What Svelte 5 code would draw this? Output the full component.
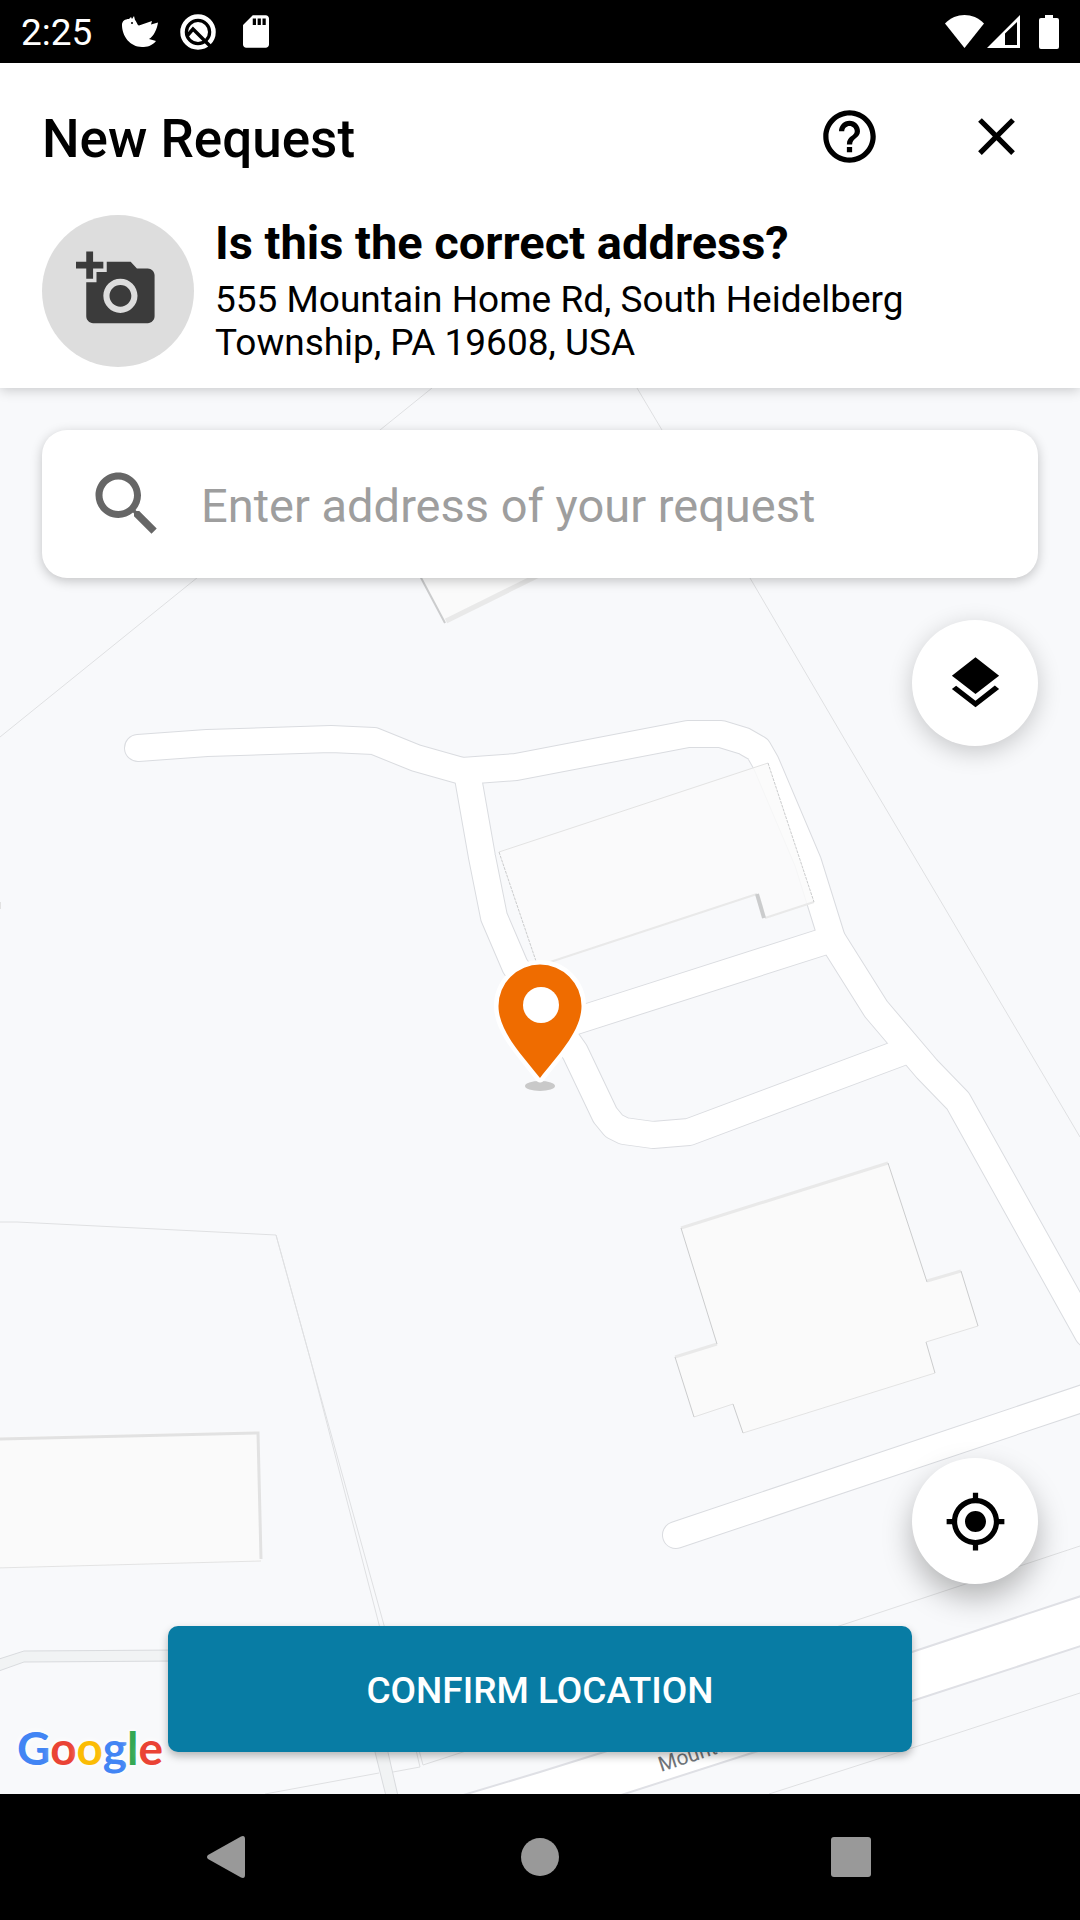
<script>
  let address = $state('');

  const roads = [
    'M138 748 L207 743 L331 739 L374 741 L416 758 L462 771 L516 767 L688 734 H721 L744 741 L758 749 L766 763 L808 862 L832 939 L876 1009 L927 1069 L958 1101 L1088 1334',
    'M467 772 L482 857 L494 917 L515 966 L575 1052 L605 1115 L614 1126 L624 1131 L653 1135 L689 1132 L900 1053',
    'M560 1026 L832 939',
    'M676 1535 L1090 1396'
  ];

  const parcelLines = [
    'M0 737 L432 388',
    'M637 388 L750 578 L845 740 L940 900 L1080 1137',
    'M0 1222 H17 L276 1235 L310 1358 L387 1636',
    'M276 1235 L310 1358 L382 1636',
    'M800 1639 L1080 1546',
    'M769 1794 L912 1748 L1080 1693',
    'M265 1794 L379 1773 M393 1772 L420 1767 L416 1750 M419 1750 L423 1765 L466 1751'
  ];

  const brand = [
    ['G', 'blue'],
    ['o', 'red'],
    ['o', 'yellow'],
    ['g', 'blue'],
    ['l', 'green'],
    ['e', 'red']
  ];
</script>

<div class="screen">
  <div class="status">
    <span class="time">2:25</span>
    <svg class="bird" viewBox="0 0 36 31" aria-hidden="true">
      <path d="M0 9C0 5 3 3 7 3L9 1l1 2 2-3 1 4c2 2 2 5 4 5.500L30 5l-1 3.500 7-2C35 13 32 20 27 23l7 2c-4 5-9 6-14 6C8 31 0 20 0 9Z" fill="#fff" />
      <circle cx="10" cy="7" r="1" />
    </svg>
    <svg class="ring" viewBox="-18 -18 36 36" aria-hidden="true">
      <circle r="15.500" fill="none" stroke="#fff" stroke-width="4.500" />
      <circle r="10" fill="#fff" />
      <path d="M-11 4L-5-3 12 14" fill="none" stroke="#000" stroke-width="3.500" />
    </svg>
    <svg class="card" viewBox="4 2 16 20" aria-hidden="true">
      <path fill="#fff" d="M18 2h-8L4.020 8 4 20c0 1.100.9 2 2 2h12c1.100 0 2-.9 2-2V4c0-1.100-.9-2-2-2zm-6 6h-2V4h2v4zm3 0h-2V4h2v4zm3 0h-2V4h2v4z" />
    </svg>
    <span class="spacer"></span>
    <svg class="wifi" viewBox="0 0 39 33" aria-hidden="true"><path fill="#fff" d="M0 8.500C11-2.800 28-2.800 39 8.500L19.500 33Z" /></svg>
    <svg class="signal" viewBox="0 0 33 33" aria-hidden="true"><path fill="#fff" fill-rule="evenodd" d="M0 33L33 0V33ZM18 18.500V30H30V7Z" /></svg>
    <svg class="battery" viewBox="0 0 20 34" aria-hidden="true"><path fill="#fff" d="M6 0h8v3h4q2 0 2 2v27q0 2-2 2H2q-2 0-2-2V5q0-2 2-2h4z" /></svg>
  </div>

  <header>
    <div class="bar">
      <h1>New Request</h1>
      <button class="icon-button" aria-label="Help">
        <svg viewBox="0 0 24 24"><path d="M11 18h2v-2h-2v2zm1-16C6.480 2 2 6.480 2 12s4.480 10 10 10 10-4.480 10-10S17.520 2 12 2zm0 18c-4.410 0-8-3.590-8-8s3.590-8 8-8 8 3.590 8 8-3.590 8-8 8zm0-14c-2.210 0-4 1.790-4 4h2c0-1.100.9-2 2-2s2 .9 2 2c0 2-3 1.750-3 5h2c0-2.250 3-2.500 3-5 0-2.210-1.790-4-4-4z" /></svg>
      </button>
      <button class="icon-button" aria-label="Close">
        <svg viewBox="0 0 24 24"><path d="M19 6.410L17.590 5 12 10.590 6.410 5 5 6.410 10.590 12 5 17.590 6.410 19 12 13.410 17.590 19 19 17.590 13.410 12z" /></svg>
      </button>
    </div>
    <div class="summary">
      <button class="photo" aria-label="Add photo">
        <svg viewBox="0 0 24 24"><path d="M3 4V1h2v3h3v2H5v3H3V6H0V4h3zm3 6V7h3V4h7l1.830 2H21c1.100 0 2 .9 2 2v12c0 1.100-.9 2-2 2H5c-1.100 0-2-.9-2-2V10h3zm7 9c2.760 0 5-2.240 5-5s-2.240-5-5-5-5 2.240-5 5 2.240 5 5 5zm-3.200-5c0 1.770 1.430 3.200 3.200 3.200s3.200-1.430 3.200-3.200-1.430-3.200-3.200-3.200-3.200 1.430-3.200 3.200z" /></svg>
      </button>
      <div class="question">
        <h2>Is this the correct address?</h2>
        <p>555 Mountain Home Rd, South Heidelberg Township, PA 19608, USA</p>
      </div>
    </div>
  </header>

  <main>
    <svg class="map" viewBox="0 388 1080 1406" preserveAspectRatio="xMidYMid slice" aria-hidden="true">
      <g class="parcels">
        {#each parcelLines as d}<path {d} />{/each}
      </g>

      <path class="lane" d="M-4 1660L24 1651L180 1650V1661L24 1662L-4 1672Z" />
      <path class="lane" d="M374 1748L386 1796H398L387 1748Z" />

      <g class="road-edge">{#each roads as d}<path {d} />{/each}</g>
      <g class="road-fill">{#each roads as d}<path {d} />{/each}</g>

      <path class="street" d="M460 1796L540 1772L604 1752L912 1652L1084 1595V1645L912 1701L755 1752L618 1796Z" />
      <text class="street-name" transform="translate(661 1772) rotate(-18)">Mountain Home Rd</text>

      <path class="building" d="M420 574L445 622L540 574Z" />
      <path class="wall" stroke-width="5" d="M446 621L541 574" />
      <path class="shade" stroke-width="2" d="M419 574L445 623" />

      <path class="building over" d="M499 852L768 763L814 902L765 919L757 894L538 967Z" />
      <path class="trim" d="M499 852L768 763" />
      <path class="wall" stroke-width="2" d="M814 902L765 918M757 894L538 966" />
      <path class="shade dotted" d="M499 852L538 967M768 763L814 902" />
      <path class="shade" stroke-width="4" d="M757 894L764 918" />

      <path class="building" d="M681 1228L888 1163L927 1282L961 1271L978 1326L926 1342L935 1373L743 1433L733 1404L694 1417L675 1357L717 1344Z" />
      <path class="wall" stroke-width="3" d="M681 1228L888 1163M927 1281L961 1271M675 1357L717 1344" />
      <path class="trim" d="M978 1326L926 1342M935 1373L743 1433M733 1404L694 1417" />
      <path class="shade" stroke-width="1" d="M681 1228L717 1344M888 1163L927 1282M961 1271L978 1326M926 1342L935 1373M743 1433L733 1404M694 1417L675 1357" />

      <path class="building" d="M-4 1437L259 1431L261 1561L-4 1568Z" />
      <path class="trim" d="M-4 1568L261 1561" />
      <path class="wall strong" stroke-width="3" d="M-4 1439L258 1433L261 1559" />
      <path class="wall strong" stroke-width="2" d="M0 902V909" />

      <ellipse cx="540" cy="1086" rx="15" ry="5" fill="#c9c9c9" />
      <path d="M540 1078C524 1057 498.500 1032 498.500 1006A41.500 41.500 0 0 1 581.500 1006C581.500 1032 556 1057 540 1078Z" fill="#ef6c00" stroke="#fff" stroke-width="9" stroke-linejoin="round" paint-order="stroke" />
      <circle cx="541" cy="1005" r="18" fill="#fff" />
    </svg>

    <label class="search">
      <svg viewBox="0 0 24 24" aria-hidden="true"><path d="M15.500 14h-.79l-.28-.27C15.410 12.590 16 11.110 16 9.500 16 5.910 13.090 3 9.500 3S3 5.910 3 9.500 5.910 16 9.500 16c1.610 0 3.090-.59 4.230-1.570l.27.28v.79l5 4.990L20.490 19l-4.990-5zm-6 0C7.010 14 5 11.990 5 9.500S7.010 5 9.500 5 14 7.010 14 9.500 11.990 14 9.500 14z" /></svg>
      <input type="text" aria-label="Address" placeholder="Enter address of your request" bind:value={address} />
    </label>

    <button class="fab" aria-label="Map layers">
      <svg viewBox="0 0 24 24"><path d="M11.990 18.540l-7.370-5.730L3 14.070l9 7 9-7-1.630-1.270-7.380 5.740zM12 16l7.360-5.730L21 9l-9-7-9 7 1.630 1.270L12 16z" /></svg>
    </button>
    <span class="spacer"></span>
    <button class="fab raised" aria-label="My location">
      <svg viewBox="0 0 24 24"><path d="M12 8c-2.210 0-4 1.790-4 4s1.790 4 4 4 4-1.790 4-4-1.790-4-4-4zm8.940 3c-.46-4.170-3.770-7.480-7.940-7.940V1h-2v2.060C6.830 3.520 3.520 6.830 3.060 11H1v2h2.060c.46 4.170 3.770 7.480 7.940 7.940V23h2v-2.060c4.170-.46 7.480-3.770 7.940-7.940H23v-2h-2.060zM12 19c-3.870 0-7-3.130-7-7s3.130-7 7-7 7 3.130 7 7-3.130 7-7 7z" /></svg>
    </button>

    <div class="foot">
      <div class="brand">{#each brand as [letter, tone]}<span class={tone}>{letter}</span>{/each}</div>
      <button class="confirm">CONFIRM LOCATION</button>
    </div>
  </main>

  <nav>
    <button aria-label="Back"><svg viewBox="0 0 44 44"><path d="M1 20L34 1.500Q38 0 38 4V40Q38 44 34 42.500L1 24Q-1 22 1 20Z" /></svg></button>
    <button aria-label="Home"><svg viewBox="0 0 44 44"><circle cx="22" cy="22" r="19" /></svg></button>
    <button aria-label="Recent apps"><svg viewBox="0 0 44 44"><rect x="2" y="2" width="40" height="40" rx="3" /></svg></button>
  </nav>
</div>

<style>
  :global(body) {
    margin: 0;
  }

  .screen {
    display: flex;
    flex-direction: column;
    min-height: 100vh;
    font-family: Roboto, 'Liberation Sans', sans-serif;
    color: #000;
    background: #fff;
  }

  button {
    display: flex;
    align-items: center;
    justify-content: center;
    padding: 0;
    border: 0;
    background: none;
    font: inherit;
    cursor: pointer;
  }

  svg {
    display: block;
    flex: none;
  }

  .spacer {
    flex: 1;
  }

  .status {
    display: flex;
    align-items: center;
    height: 63px;
    padding: 0 21px;
    background: #000;
    color: #fff;
  }

  .time {
    margin-right: 30px;
    padding-top: 2px;
    font-size: 37px;
    line-height: 43px;
  }

  .bird {
    width: 36px;
    height: 31px;
    margin-right: 22px;
  }

  .ring {
    width: 36px;
    height: 36px;
    margin-right: 27px;
  }

  .card {
    width: 26px;
    height: 33px;
  }

  .wifi {
    width: 39px;
    height: 33px;
    margin-right: 3px;
  }

  .signal {
    width: 33px;
    height: 33px;
    margin-right: 19px;
  }

  .battery {
    width: 20px;
    height: 34px;
  }

  header {
    position: relative;
    z-index: 1;
    padding-bottom: 21px;
    background: #fff;
    box-shadow: 0 2px 12px rgba(0, 0, 0, 0.2);
  }

  .bar {
    display: flex;
    align-items: center;
    gap: 21px;
    height: 147px;
    padding: 0 21px 0 42px;
  }

  h1 {
    flex: 1;
    margin: 0;
    padding-top: 4px;
    font-size: 53px;
    line-height: 62px;
    font-weight: 500;
  }

  .icon-button {
    width: 126px;
    height: 126px;
  }

  .icon-button svg,
  .fab svg {
    width: 63px;
    height: 63px;
  }

  .summary {
    display: flex;
    align-items: flex-start;
    gap: 21px;
    padding: 5px 42px 0;
  }

  .photo {
    flex: none;
    width: 152px;
    height: 152px;
    border-radius: 50%;
    background: #ddd;
  }

  .photo svg {
    width: 82px;
    height: 82px;
    margin: 0 2px 4px 0;
    fill: #3b3b3b;
  }

  .question {
    flex: 1;
  }

  h2 {
    margin: 0 0 8px;
    font-size: 47px;
    line-height: 55px;
    font-weight: 700;
  }

  p {
    max-width: 760px;
    margin: 0;
    font-size: 37px;
    line-height: 43px;
  }

  main {
    position: relative;
    flex: 1;
    display: flex;
    flex-direction: column;
    align-items: flex-end;
    padding-top: 42px;
    overflow: hidden;
    background: #f8f9fb;
    isolation: isolate;
  }

  .map {
    position: absolute;
    inset: 0;
    z-index: -1;
    width: 100%;
    height: 100%;
    fill: none;
  }

  .parcels path {
    stroke: #dfe0e2;
    stroke-width: 1;
  }

  .lane {
    fill: #f1f3f4;
    stroke: #d9dbde;
  }

  .road-edge path {
    stroke: #dadce0;
    stroke-width: 28;
    stroke-linecap: round;
    stroke-linejoin: round;
  }

  .road-fill path {
    stroke: #fff;
    stroke-width: 26;
    stroke-linecap: round;
    stroke-linejoin: round;
  }

  .street {
    fill: #fff;
    stroke: #dfe0e5;
    stroke-width: 2;
  }

  .street-name {
    fill: #70757a;
    font-size: 21px;
  }

  .building {
    fill: #fafafa;
  }

  .over {
    fill-opacity: 0.85;
  }

  .trim {
    stroke: #e3e3e3;
  }

  .wall {
    stroke: #e9e9e9;
  }

  .strong {
    stroke: #e2e2e2;
  }

  .shade {
    stroke: #cbcccd;
  }

  .dotted {
    stroke-width: 1;
    stroke-dasharray: 3 1;
  }

  .search {
    display: flex;
    align-items: center;
    gap: 32px;
    align-self: stretch;
    height: 148px;
    margin: 0 42px 42px;
    padding: 0 43px;
    box-sizing: border-box;
    border-radius: 25px;
    background: #fff;
    box-shadow: 0 3px 12px rgba(0, 0, 0, 0.22);
  }

  .search svg {
    width: 84px;
    height: 84px;
    fill: #666;
  }

  input {
    flex: 1;
    min-width: 0;
    padding: 2px 0 0;
    border: 0;
    outline: 0;
    background: none;
    font-family: inherit;
    font-size: 47px;
    line-height: 55px;
    color: #000;
  }

  input::placeholder {
    color: #9e9e9e;
    opacity: 1;
  }

  .fab {
    width: 126px;
    height: 126px;
    margin-right: 42px;
    border-radius: 50%;
    background: #fff;
    box-shadow: 0 6px 24px rgba(0, 0, 0, 0.2);
  }

  .raised {
    margin-bottom: 42px;
    box-shadow: 0 14px 30px rgba(0, 0, 0, 0.28);
  }

  .foot {
    display: grid;
    grid-template-columns: 168px 1fr 168px;
    align-self: stretch;
  }

  .brand {
    align-self: end;
    padding: 0 0 20px 17px;
    font-family: Lato, sans-serif;
    font-size: 46px;
    line-height: 52px;
    font-weight: 700;
    text-shadow: 0 0 4px #fff, 0 0 8px #fff;
  }

  .blue {
    color: #4285f4;
  }

  .red {
    color: #ea4335;
  }

  .yellow {
    color: #fbbc05;
  }

  .green {
    color: #34a853;
  }

  .confirm {
    height: 126px;
    margin-bottom: 42px;
    padding-top: 2px;
    border-radius: 10px;
    background: #087ca4;
    box-shadow: 0 4px 8px rgba(0, 0, 0, 0.28);
    color: #fff;
    font-size: 37px;
    font-weight: 500;
  }

  nav {
    display: flex;
    justify-content: center;
    gap: 185px;
    background: #000;
  }

  nav button {
    width: 126px;
    height: 126px;
  }

  nav svg {
    width: 44px;
    height: 44px;
    fill: #999;
  }
</style>
